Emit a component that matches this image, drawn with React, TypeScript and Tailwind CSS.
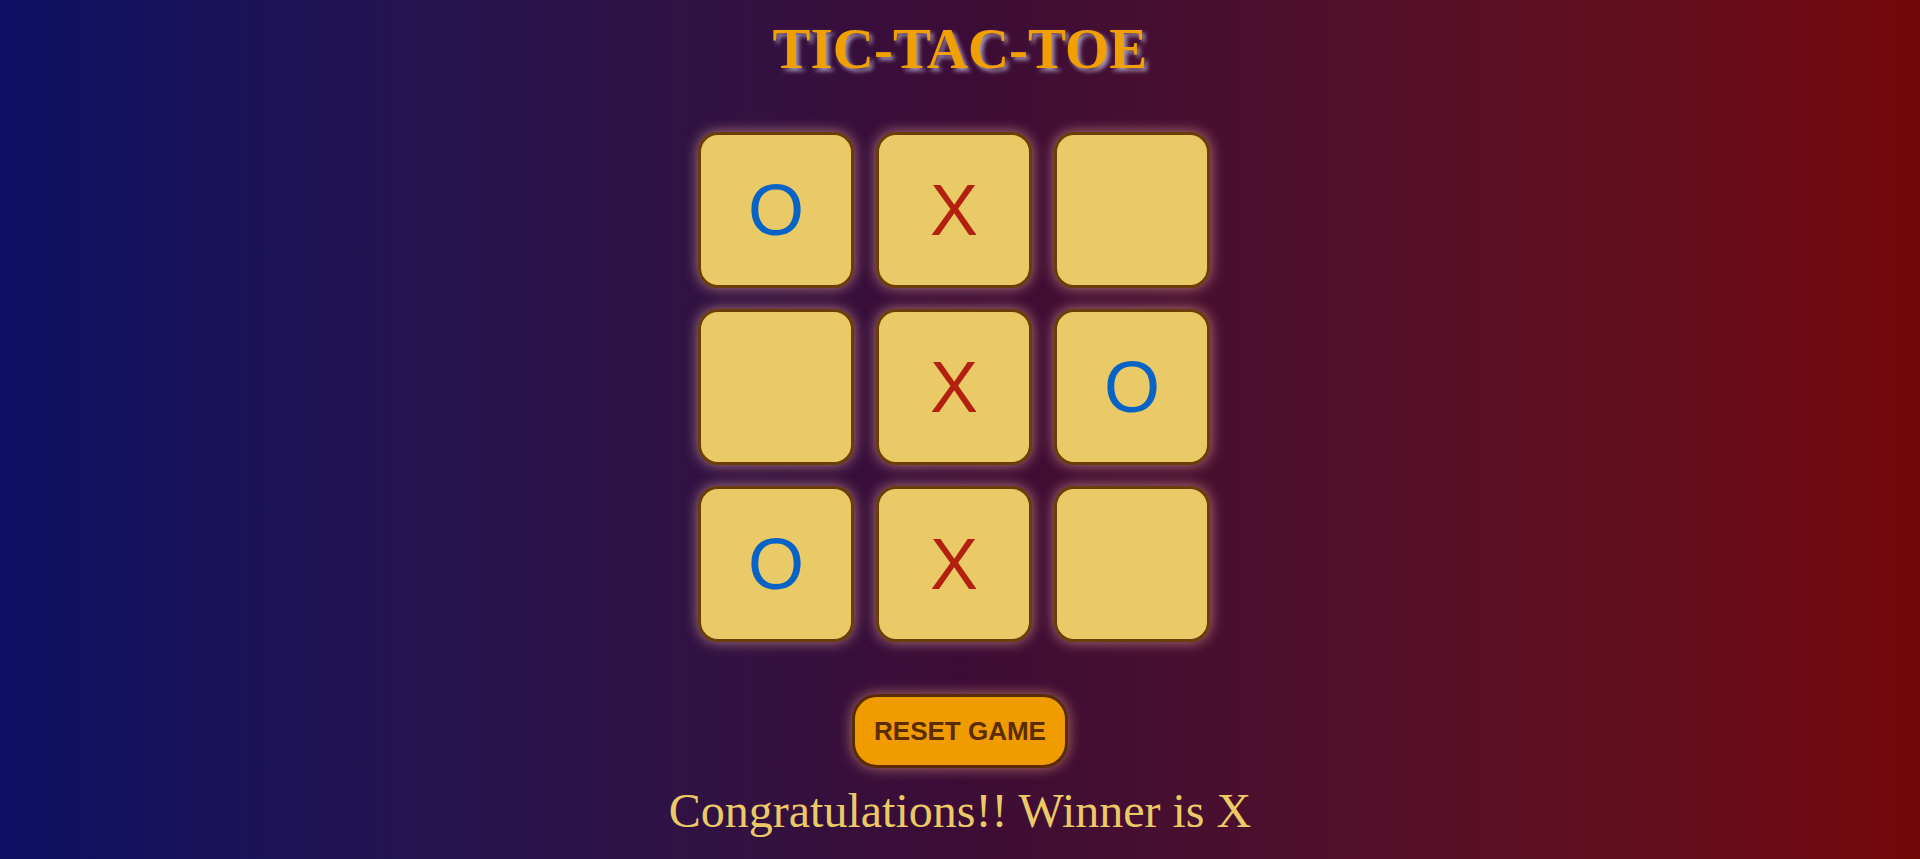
import React from 'react';

const board: string[] = ['O', 'X', '', '', 'X', 'O', 'O', 'X', ''];

export default function App() {
  return (
    <div className="min-h-screen w-full bg-gradient-to-r from-[#0c0f63] via-[#3c0c36] to-[#730707] flex flex-col items-center">
      {/* 标题 */}
      <h1 className="mt-[18px] text-[57px] leading-[62px] font-bold text-[#f0a000] [font-family:'Liberation_Serif',serif] [text-shadow:3px_3px_4px_rgba(190,185,215,0.8)]">
        TIC-TAC-TOE
      </h1>
      {/* 棋盘 */}
      <div className="mt-[52px] w-[524px] grid grid-cols-[repeat(3,156px)] gap-x-[22px] gap-y-[21px]">
        {board.map((v, i) => (
          <div
            key={i}
            className="w-[156px] h-[156px] rounded-[20px] border-[3px] border-[#6b3e08] bg-[#eaca66] flex items-center justify-center shadow-[0_0_14px_rgba(255,190,170,0.6)]"
          >
            <span
              className={
                'text-[72px] leading-none [font-family:"Liberation_Sans",Arial,sans-serif] ' +
                (v === 'X' ? 'text-[#b3200f]' : 'text-[#0863c6]')
              }
            >
              {v}
            </span>
          </div>
        ))}
      </div>
      {/* 重置按钮 */}
      <button className="mt-[52px] px-[19px] py-[19px] border-[3px] border-[#5a2c02] rounded-[25px] bg-[#f09c00] text-[#5b2c00] text-[26px] leading-[30px] font-bold [font-family:'Liberation_Sans',Arial,sans-serif] shadow-[0_0_14px_rgba(255,180,140,0.6)]">
        RESET GAME
      </button>
      <p className="mt-[15px] text-[48px] leading-[55px] text-[#ebc967] [font-family:'Liberation_Serif',serif]">
        Congratulations!! Winner is X
      </p>
    </div>
  );
}
